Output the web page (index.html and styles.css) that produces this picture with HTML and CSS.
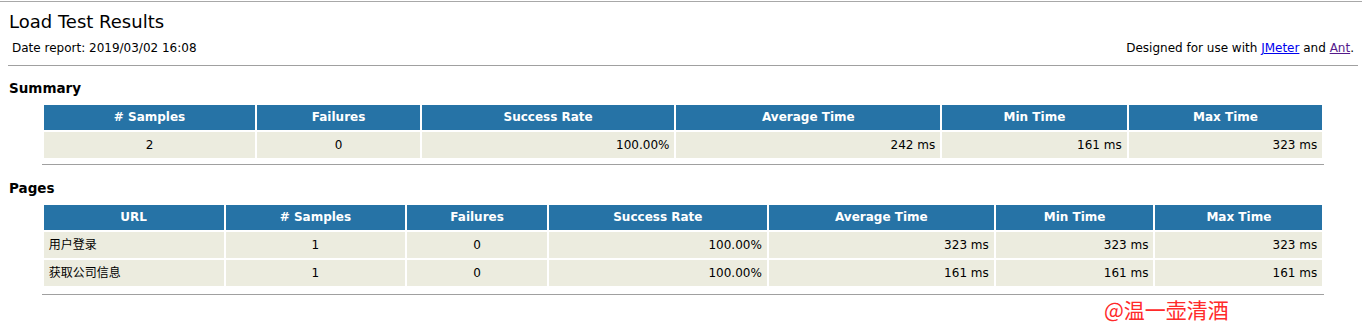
FILE: index.html
```html
<!DOCTYPE html>
<html>
<head>
<meta charset="utf-8">
<title>Load Test Results</title>
<link rel="stylesheet" href="styles.css">
</head>
<body>
<div class="topline"></div>
<h1 class="title">Load Test Results</h1>
<div class="meta">
  <span>Date report: 2019/03/02 16:08</span>
  <span>Designed for use with <a class="link" href="#">JMeter</a> and <a class="link visited" href="#">Ant</a>.</span>
</div>
<div class="rule full"></div>

<h2 class="section">Summary</h2>
<table class="details">
  <colgroup>
    <col class="s1"><col class="s2"><col class="s3"><col class="s4"><col class="s5"><col class="s6">
  </colgroup>
  <thead>
    <tr><th># Samples</th><th>Failures</th><th>Success Rate</th><th>Average Time</th><th>Min Time</th><th>Max Time</th></tr>
  </thead>
  <tbody>
    <tr><td class="c">2</td><td class="c">0</td><td class="r">100.00%</td><td class="r">242 ms</td><td class="r">161 ms</td><td class="r">323 ms</td></tr>
  </tbody>
</table>
<div class="rule part"></div>

<h2 class="section second">Pages</h2>
<table class="details pages">
  <colgroup>
    <col class="p1"><col class="p2"><col class="p3"><col class="p4"><col class="p5"><col class="p6"><col class="p7">
  </colgroup>
  <thead>
    <tr><th>URL</th><th># Samples</th><th>Failures</th><th>Success Rate</th><th>Average Time</th><th>Min Time</th><th>Max Time</th></tr>
  </thead>
  <tbody>
    <tr><td class="l">用户登录</td><td class="c">1</td><td class="c">0</td><td class="r">100.00%</td><td class="r">323 ms</td><td class="r">323 ms</td><td class="r">323 ms</td></tr>
    <tr><td class="l">获取公司信息</td><td class="c">1</td><td class="c">0</td><td class="r">100.00%</td><td class="r">161 ms</td><td class="r">161 ms</td><td class="r">161 ms</td></tr>
  </tbody>
</table>
<div class="rule part last"></div>
<div class="watermark">@温一壶清酒</div>
</body>
</html>
```
FILE: styles.css
```css
html, body {
  margin: 0;
  padding: 0;
  background: #ffffff;
}
body {
  position: relative;
  padding: 0 8px;
  font-family: "DejaVu Sans", Verdana, "Noto Sans CJK SC", sans-serif;
  font-size: 12px;
  color: #000000;
  height: 332px;
  overflow: hidden;
}
.topline {
  margin: 1px -8px 0 -8px;
  width: 1362px;
  height: 1px;
  background: #a8a8a8;
}
.title {
  margin: 9px 0 0 1px;
  font-size: 18px;
  font-weight: normal;
  line-height: 22px;
}
.meta {
  display: flex;
  justify-content: space-between;
  margin-top: 7px;
  padding: 0 4px 0 4px;
  line-height: 16px;
}
.link {
  color: #0000ee;
  text-decoration: underline;
}
.link.visited {
  color: #551a8b;
}
.rule {
  height: 1px;
  background: #a0a0a0;
}
.rule.full {
  margin-top: 9px;
  width: 1350px;
}
.rule.part {
  margin: 4px auto 0 auto;
  width: 95%;
}
.rule.part.last {
  margin-top: 6px;
}
.section {
  margin: 14px 0 0 1px;
  font-size: 13.5px;
  font-weight: bold;
  line-height: 16px;
}
.section.second {
  margin-top: 15px;
}
.details {
  width: 95%;
  margin: 7px auto 0 auto;
  border-collapse: separate;
  border-spacing: 2px;
  table-layout: fixed;
}
.details.pages {
  margin-top: 7px;
}
.details th {
  background: #2673a6;
  color: #ffffff;
  font-weight: bold;
  text-align: center;
  padding: 5px;
  height: 15px;
  line-height: 15px;
}
.details td {
  background: #ececdf;
  padding: 5px;
  height: 16px;
  line-height: 16px;
}
.details td.c { text-align: center; }
.details td.r { text-align: right; }
.details td.l {
  text-align: left;
  font-family: "DejaVu Sans", "Noto Sans CJK SC", sans-serif;
}
.s1 { width: 211px; }
.s2 { width: 162px; }
.s3 { width: 252px; }
.s4 { width: 263px; }
.s5 { width: 184px; }
.s6 { width: 193px; }
.p1 { width: 179px; }
.p2 { width: 179px; }
.p3 { width: 139px; }
.p4 { width: 217px; }
.p5 { width: 224px; }
.p6 { width: 157px; }
.p7 { width: 166px; }
.watermark {
  position: absolute;
  left: 1104px;
  top: 297px;
  font-family: "Noto Sans CJK SC", sans-serif;
  font-size: 21px;
  line-height: 25px;
  color: #ff2a2a;
}
```
